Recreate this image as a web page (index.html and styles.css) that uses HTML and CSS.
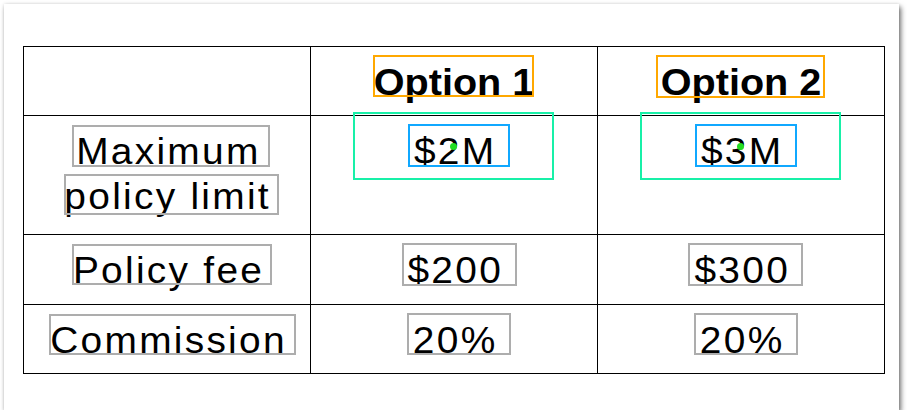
FILE: index.html
```html
<!DOCTYPE html>
<html>
<head>
<meta charset="utf-8">
<link rel="stylesheet" href="styles.css">
</head>
<body>
<div class="card">
  <table class="grid">
    <colgroup><col class="c"><col class="c"><col class="c"></colgroup>
    <tr class="r-head">
      <td></td>
      <td class="head"><span class="t">Option 1</span></td>
      <td class="head"><span class="t">Option 2</span></td>
    </tr>
    <tr class="r-tall">
      <td><span class="t">Maximum</span><br><span class="t">policy limit</span></td>
      <td><span class="t">$2M</span></td>
      <td><span class="t">$3M</span></td>
    </tr>
    <tr class="r-mid">
      <td><span class="t">Policy fee</span></td>
      <td><span class="t">$200</span></td>
      <td><span class="t">$300</span></td>
    </tr>
    <tr class="r-last">
      <td><span class="t">Commission</span></td>
      <td><span class="t">20%</span></td>
      <td><span class="t">20%</span></td>
    </tr>
  </table>

  <div class="marks">
    <div class="box orange" style="left:369px;top:51px;width:161px;height:42px"></div>
    <div class="box orange" style="left:652px;top:51px;width:169px;height:43px"></div>
    <div class="box teal" style="left:349px;top:108px;width:201px;height:68px"></div>
    <div class="box teal" style="left:636px;top:108px;width:201px;height:68px"></div>
    <div class="box blue" style="left:404px;top:120px;width:102px;height:43px"></div>
    <div class="box blue" style="left:691px;top:120px;width:102px;height:43px"></div>
    <div class="dot" style="left:446px;top:139px"></div>
    <div class="dot" style="left:733px;top:139px"></div>
    <div class="box gray" style="left:68px;top:121px;width:198px;height:42px"></div>
    <div class="box gray" style="left:60px;top:170px;width:215px;height:41px"></div>
    <div class="box gray" style="left:68px;top:240px;width:200px;height:41px"></div>
    <div class="box gray" style="left:45px;top:310px;width:247px;height:41px"></div>
    <div class="box gray" style="left:398px;top:239px;width:115px;height:43px"></div>
    <div class="box gray" style="left:684px;top:239px;width:115px;height:43px"></div>
    <div class="box gray" style="left:403px;top:309px;width:104px;height:42px"></div>
    <div class="box gray" style="left:690px;top:309px;width:104px;height:42px"></div>
  </div>
</div>
</body>
</html>
```

FILE: styles.css
```css
html, body {
  margin: 0;
  padding: 0;
  background: #ffffff;
}

.card {
  position: relative;
  margin: 4px 0 0 4px;
  width: 895px;
  height: 406px;
  background: #ffffff;
  box-shadow: 2px 3px 5px rgba(0, 0, 0, 0.55), 0 0 3px rgba(0, 0, 0, 0.12);
  padding: 42px 0 0 19px;
  box-sizing: border-box;
}

.grid {
  border-collapse: collapse;
  table-layout: fixed;
  width: 862px;
}

.grid col.c {
  width: 287px;
}

.grid td {
  border: 1px solid #000;
  text-align: center;
  vertical-align: top;
  padding: 13px 0 0 0;
  font-family: "Liberation Sans", Arial, sans-serif;
  font-size: 36px;
  line-height: 45px;
  color: #000;
}

.grid td .t {
  display: inline-block;
  transform: scaleX(1.08);
  letter-spacing: 2.1px;
  margin-right: -2.1px;
  white-space: nowrap;
}

.grid td.head {
  font-weight: bold;
}

.grid td.head .t {
  transform: scaleX(1.1);
  letter-spacing: 0;
  margin-right: 0;
}

.r-head { height: 69px; }
.r-tall { height: 119px; }
.r-mid { height: 70px; }
.r-last { height: 69px; }

.marks {
  position: absolute;
  inset: 0;
  pointer-events: none;
}

.box {
  position: absolute;
  box-sizing: border-box;
  border: 2px solid;
}

.orange { border-color: #ffa800; }
.teal { border-color: #18f0a8; }
.blue { border-color: #10a8ff; }
.gray { border-color: #adadad; }

.dot {
  position: absolute;
  width: 7px;
  height: 7px;
  border-radius: 50%;
  background: #22dd22;
}
```
